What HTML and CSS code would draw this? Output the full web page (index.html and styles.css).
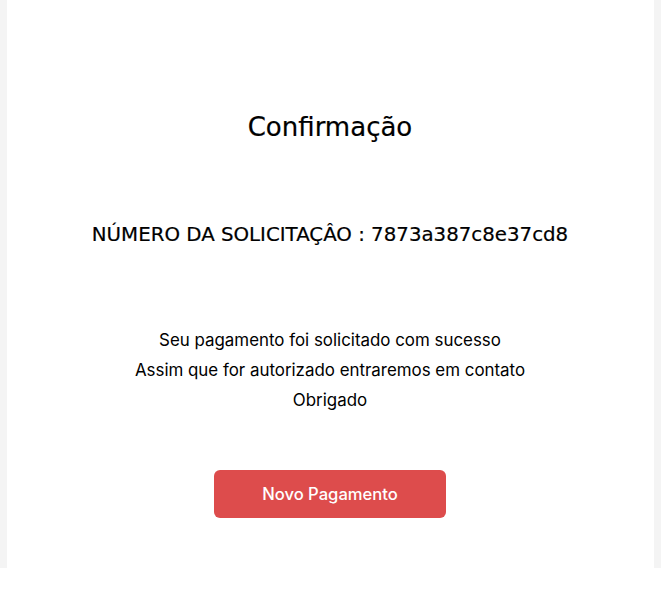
FILE: index.html
```html
<!DOCTYPE html>
<html lang="pt">
<head>
<meta charset="utf-8">
<title>Confirmação</title>
<link rel="stylesheet" href="styles.css">
</head>
<body>
<div class="page">
  <main class="card">
    <h1 class="title">Confirmação</h1>
    <h2 class="request">NÚMERO DA SOLICITAÇÂO : 7873a387c8e37cd8</h2>
    <div class="message">
      <p>Seu pagamento foi solicitado com sucesso</p>
      <p>Assim que for autorizado entraremos em contato</p>
      <p>Obrigado</p>
    </div>
    <button class="btn" type="button">Novo Pagamento</button>
  </main>
</div>
</body>
</html>
```

FILE: styles.css
```css
html, body {
  margin: 0;
  padding: 0;
  background: #ffffff;
}
.page {
  width: 661px;
  height: 568px;
  box-sizing: border-box;
  padding: 0 7px;
  background: #f4f4f4;
}
.card {
  height: 100%;
  background: #ffffff;
  display: flex;
  flex-direction: column;
  align-items: center;
  padding: 112px 1px 0 0;
  box-sizing: border-box;
  color: #000;
}
.title {
  margin: 0;
  font-family: "DejaVu Sans", Verdana, sans-serif;
  font-weight: normal;
  font-size: 26px;
  line-height: 30px;
  -webkit-text-stroke: 0.2px #000;
}
.request {
  margin: 81px 0 0;
  font-family: "DejaVu Sans", Verdana, sans-serif;
  font-weight: normal;
  font-size: 19.8px;
  line-height: 24px;
  -webkit-text-stroke: 0.2px #000;
}
.message {
  margin-top: 78px;
  text-align: center;
  font-family: Inter, "Noto Sans", sans-serif;
  font-size: 16.9px;
  line-height: 30px;
}
.message p {
  margin: 0;
}
.btn {
  margin-top: 55px;
  width: 232px;
  height: 48px;
  border: none;
  border-radius: 6px;
  background: #dd4c4c;
  color: #ffffff;
  font-family: Inter, "Noto Sans", sans-serif;
  font-weight: 500;
  font-size: 16.6px;
  cursor: pointer;
}
```
